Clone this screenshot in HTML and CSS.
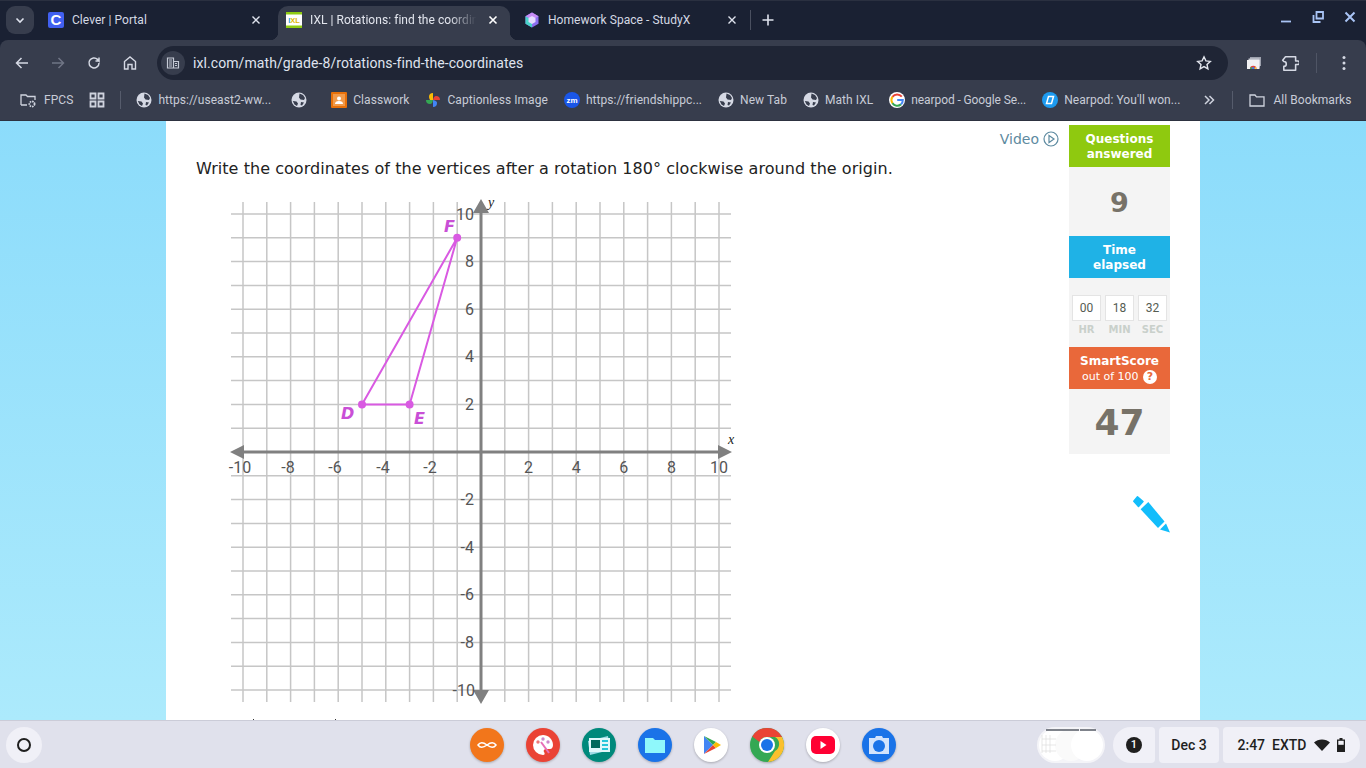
FILE: index.html
```html
<!DOCTYPE html>
<html lang="en">
<head>
<meta charset="utf-8">
<title>IXL | Rotations: find the coordinates</title>
<link rel="stylesheet" href="styles.css">
</head>
<body>
<header class="browser">
  <div class="tabstrip">
    <button class="tab-search"><svg width="12" height="12" viewBox="0 0 12 12"><path d="M2.500 4.500 6 8l3.500-3.500" fill="none" stroke="#dfe3ee" stroke-width="1.600"/></svg></button>
    <div class="tab">
      <svg class="fav" viewBox="0 0 16 16"><rect width="16" height="16" rx="2" fill="#4160f0"/><text x="8" y="13.300" text-anchor="middle" class="fav-c">C</text></svg>
      <span class="tab-title">Clever | Portal</span>
      <svg class="tab-x" viewBox="0 0 10 10"><path d="M1.500 1.500l7 7m0-7l-7 7" stroke="#dfe3ee" stroke-width="1.400"/></svg>
    </div>
    <div class="tab active">
      <svg class="fav" viewBox="0 0 16 16"><rect width="16" height="16" fill="#fff"/><rect width="16" height="2.500" fill="#8fcb12"/><rect y="13.500" width="16" height="2.500" fill="#8fcb12"/><text x="8" y="10.800" text-anchor="middle" class="fav-ixl"><tspan fill="#2f9fd8">I</tspan><tspan fill="#e0b400">X</tspan><tspan fill="#e0b400">L</tspan></text></svg>
      <span class="tab-title fade">IXL | Rotations: find the coordin</span>
      <svg class="tab-x" viewBox="0 0 10 10"><path d="M1.500 1.500l7 7m0-7l-7 7" stroke="#fff" stroke-width="1.600"/></svg>
    </div>
    <div class="tab third">
      <svg class="fav" viewBox="0 0 16 16"><path d="M8 .500l6.500 3.700v7.600L8 15.500l-6.500-3.700V4.200z" fill="#8c6ff0"/><path d="M8 .500l6.500 3.700L8 8 1.500 4.200z" fill="#c78cf5"/><path d="M1.500 4.200 8 8v7.500l-6.500-3.700z" fill="#49d3c8"/><path d="M8 4l3.500 2v4L8 12l-3.500-2V6z" fill="#e6dcff"/></svg>
      <span class="tab-title">Homework Space - StudyX</span>
      <svg class="tab-x" viewBox="0 0 10 10"><path d="M1.500 1.500l7 7m0-7l-7 7" stroke="#dfe3ee" stroke-width="1.400"/></svg>
    </div>
    <span class="tab-sep"></span>
    <svg class="new-tab" viewBox="0 0 12 12"><path d="M6 .500v11M.500 6h11" stroke="#dfe3ee" stroke-width="1.600"/></svg>
    <div class="win-controls">
      <svg class="win" viewBox="0 0 12 12"><path d="M1 10.500h10" stroke="#a9c4f5" stroke-width="1.800"/></svg>
      <svg class="win" viewBox="0 0 12 12"><path d="M4.500 1h6.500v6.500H4.500z" fill="none" stroke="#a9c4f5" stroke-width="1.800"/><path d="M1.500 4v7h7" fill="none" stroke="#a9c4f5" stroke-width="1.800"/></svg>
      <svg class="win" viewBox="0 0 12 12"><path d="M1.500 1.500l9 9m0-9l-9 9" stroke="#a9c4f5" stroke-width="2"/></svg>
    </div>
  </div>
  <div class="toolbar">
    <svg class="tool" viewBox="0 0 16 16"><path d="M14 8H3M7.500 3 2.500 8l5 5" fill="none" stroke="#d5d9e4" stroke-width="1.500"/></svg>
    <svg class="tool" viewBox="0 0 16 16"><path d="M2 8h11M8.500 3l5 5-5 5" fill="none" stroke="#6f7585" stroke-width="1.500"/></svg>
    <svg class="tool" viewBox="0 0 16 16"><path d="M13 8a5 5 0 1 1-1.500-3.600L13 6V2.500M13 6H9.500" fill="none" stroke="#d5d9e4" stroke-width="1.500"/></svg>
    <svg class="tool" viewBox="0 0 16 16"><path d="M2.500 14V6.500L8 2l5.500 4.500V14H10V9.500H6V14z" fill="none" stroke="#d5d9e4" stroke-width="1.400"/></svg>
    <div class="omnibox">
      <span class="site-chip"><svg viewBox="0 0 14 14" width="14" height="14"><path d="M1.500 2h6v10h-6z M7.500 5.500h5V12h-5z" fill="none" stroke="#c5cad6" stroke-width="1.200"/><path d="M3 4h3M3 6h3M3 8h3M3 10h3M9 7.500h2M9 9.500h2" stroke="#c5cad6"/></svg></span>
      <span class="url">ixl.com/math/grade-8/rotations-find-the-coordinates</span>
      <svg class="star" viewBox="0 0 16 16"><path d="M8 1.800l1.900 4.100 4.400.5-3.300 3 .9 4.400L8 11.600l-3.900 2.200.9-4.400-3.300-3 4.400-.5z" fill="none" stroke="#e3e6ee" stroke-width="1.400"/></svg>
    </div>
    <svg class="ext-chrome" viewBox="0 0 14 12"><rect x="3" y="0" width="11" height="9" fill="#9da1ad"/><rect x="1.500" y="1.500" width="11" height="9" fill="#c9ccd4"/><rect y="3" width="12.500" height="9" fill="#f1f1f3"/><path d="M3 12a3.250 3.250 0 0 1 6.500 0z" fill="#e0453a"/><path d="M3 12a3.250 3.250 0 0 1 1-2.300l1.500 2.300z" fill="#35a853"/><path d="M9.500 12a3.250 3.250 0 0 0-1-2.300L7 12z" fill="#f9c536"/><circle cx="6.250" cy="11.200" r="1.200" fill="#3b78e7"/></svg>
    <svg class="ext-puzzle" viewBox="0 0 16 16"><path d="M1.500 5.500 4 2.500h9v3.700h1.800a1.600 1.600 0 0 1 0 3.200H13v5H2.500V11a2.200 2.200 0 0 0 0-4.400z" fill="none" stroke="#d5d9e4" stroke-width="1.400" stroke-linejoin="round"/></svg>
    <span class="tool-sep"></span>
    <svg class="kebab" viewBox="0 0 4 16"><circle cx="2" cy="2.500" r="1.500" fill="#d5d9e4"/><circle cx="2" cy="8" r="1.500" fill="#d5d9e4"/><circle cx="2" cy="13.500" r="1.500" fill="#d5d9e4"/></svg>
  </div>
  <nav class="bookmarks">
    <div class="bm wide"><svg class="ico" viewBox="0 0 16 16"><path d="M1 13V3h5l1.500 1.500H15V8M1 13h6" fill="none" stroke="#cfd3de" stroke-width="1.300"/><circle cx="12" cy="12" r="2.600" fill="none" stroke="#cfd3de" stroke-width="1.800" stroke-dasharray="1.600 .8"/></svg><span>FPCS</span></div>
    <svg class="apps" viewBox="0 0 16 16"><path d="M1.500 1.500h5v5h-5zM9.500 1.500h5v5h-5zM1.500 9.500h5v5h-5zM9.500 9.500h5v5h-5z" fill="none" stroke="#cfd3de" stroke-width="1.800"/></svg>
    <span class="bm-sep"></span>
    <div class="bm"><svg class="ico"><use href="#globe"/></svg><span>https://useast2-ww...</span></div>
    <div class="bm bm-icononly"><svg class="ico"><use href="#globe"/></svg></div>
    <div class="bm"><svg class="ico" viewBox="0 0 16 16"><rect width="16" height="16" rx="1" fill="#e8710a"/><rect x="2" y="2" width="12" height="12" fill="#f29a49"/><circle cx="8" cy="6.500" r="2" fill="#fff"/><path d="M4 12a4 3 0 0 1 8 0z" fill="#fff"/></svg><span>Classwork</span></div>
    <div class="bm"><svg class="ico" viewBox="0 0 16 16"><path d="M8 8V1a4 4 0 0 0-4 4c0 1 .5 2 1 3z" fill="#f9bb05"/><path d="M8 8h7a4 4 0 0 0-4-4c-1.500 0-2.500 1-3 4z" fill="#ea4335"/><path d="M8 8v7a4 4 0 0 0 4-4c0-1.500-1-2.500-4-3z" fill="#4285f4"/><path d="M8 8H1a4 4 0 0 0 4 4c1.500 0 2.500-1 3-4z" fill="#34a853"/></svg><span>Captionless Image</span></div>
    <div class="bm"><svg class="ico" viewBox="0 0 16 16"><circle cx="8" cy="8" r="8" fill="#1a56e8"/><text x="8" y="10.500" text-anchor="middle" class="fav-zm">zm</text></svg><span>https://friendshippc...</span></div>
    <div class="bm"><svg class="ico"><use href="#globe"/></svg><span>New Tab</span></div>
    <div class="bm"><svg class="ico"><use href="#globe"/></svg><span>Math IXL</span></div>
    <div class="bm"><svg class="ico" viewBox="0 0 16 16"><circle cx="8" cy="8" r="8" fill="#fff"/><path d="M12.800 4.700A6 6 0 0 0 3.400 4.800" fill="none" stroke="#ea4335" stroke-width="2"/><path d="M3.400 4.800a6 6 0 0 0 0 6.400" fill="none" stroke="#fbbc05" stroke-width="2"/><path d="M3.400 11.200A6 6 0 0 0 12 12.400" fill="none" stroke="#34a853" stroke-width="2"/><path d="M12 12.400A6 6 0 0 0 13.800 8H8.200" fill="none" stroke="#4285f4" stroke-width="2"/></svg><span class="tight">nearpod - Google Se...</span></div>
    <div class="bm"><svg class="ico" viewBox="0 0 16 16"><circle cx="8" cy="8" r="8" fill="#1d9bf0"/><path d="M6.500 4.500h5l-2 7h-5z" fill="none" stroke="#fff" stroke-width="1.500"/></svg><span>Nearpod: You'll won...</span></div>
    <svg class="chev" viewBox="0 0 12 12"><path d="M2 2l4 4-4 4M6.500 2l4 4-4 4" fill="none" stroke="#cfd3de" stroke-width="1.500"/></svg>
    <span class="bm-sep last"></span>
    <div class="bm wide"><svg class="ico" viewBox="0 0 16 16"><path d="M1 3h5l1.500 1.800H15V14H1z" fill="none" stroke="#cfd3de" stroke-width="1.300"/></svg><span>All Bookmarks</span></div>
    <svg class="defs" width="0" height="0"><defs><symbol id="globe" viewBox="0 0 16 16"><circle cx="8" cy="8" r="7.500" fill="#d5d9e4"/><path d="M8.500 1.500 12 3l2 3-1 2-3.500-.5L8 5.500zM1.800 9l3.700.5 1.500 2-1 2.500-2.500-1.500zM10 10l3 .5-2 3-1.500-.5z" fill="#373d4d"/></symbol></defs></svg>
  </nav>
</header>

<main class="page">
  <section class="sheet">
    <div class="work">
      <a class="video">Video <svg viewBox="0 0 16 16" width="16" height="16"><circle cx="8" cy="8" r="7" fill="none" stroke="#5d8aa0" stroke-width="1.200"/><path d="M6 4.500 11 8l-5 3.500z" fill="none" stroke="#5d8aa0" stroke-width="1.200"/></svg></a>
      <p class="question">Write the coordinates of the vertices after a rotation 180° clockwise around the origin.</p>
      <svg class="graph" viewBox="221 195 520 520" width="520" height="520">
        <path class="grid" d="M243 202V702M266.800 202V702M290.600 202V702M314.400 202V702M338.200 202V702M362 202V702M385.800 202V702M409.600 202V702M433.400 202V702M457.200 202V702M504.800 202V702M528.600 202V702M552.400 202V702M576.200 202V702M600 202V702M623.800 202V702M647.600 202V702M671.400 202V702M695.200 202V702M719 202V702"/>
        <path class="grid" d="M231 214H731M231 237.800H731M231 261.600H731M231 285.400H731M231 309.200H731M231 333H731M231 356.800H731M231 380.600H731M231 404.400H731M231 428.200H731M231 475.800H731M231 499.600H731M231 523.400H731M231 547.200H731M231 571H731M231 594.800H731M231 618.600H731M231 642.400H731M231 666.200H731M231 690H731"/>
        <path class="axis" d="M240 452H722M481 210V694"/>
        <path class="arrow" d="M230 452l14-7v14zM732 452l-14-7v14zM481 199l-8 14h16zM481 704l-8-14h16z"/>
        <g class="tick">
          <text x="240" y="473" text-anchor="middle">-10</text><text x="288" y="473" text-anchor="middle">-8</text><text x="335" y="473" text-anchor="middle">-6</text><text x="383" y="473" text-anchor="middle">-4</text><text x="430" y="473" text-anchor="middle">-2</text>
          <text x="528.600" y="473" text-anchor="middle">2</text><text x="576.200" y="473" text-anchor="middle">4</text><text x="623.800" y="473" text-anchor="middle">6</text><text x="671.400" y="473" text-anchor="middle">8</text><text x="719" y="473" text-anchor="middle">10</text>
          <g text-anchor="end">
            <text x="474" y="220">10</text><text x="474" y="267">8</text><text x="474" y="315">6</text><text x="474" y="362">4</text><text x="474" y="410">2</text>
            <text x="474" y="505">-2</text><text x="474" y="553">-4</text><text x="474" y="600">-6</text><text x="474" y="648">-8</text><text x="475" y="696">-10</text>
          </g>
        </g>
        <text class="axis-name" x="728" y="444">x</text>
        <text class="axis-name" x="488" y="207">y</text>
        <path class="shape" d="M362 404.400H409.600L457.200 237.800Z"/>
        <circle class="pt" cx="362" cy="404.400" r="4"/><circle class="pt" cx="409.600" cy="404.400" r="4"/><circle class="pt" cx="457.200" cy="237.800" r="4"/>
        <text class="pt-name" x="341" y="419">D</text><text class="pt-name" x="414" y="424">E</text><text class="pt-name" x="444" y="232">F</text>
      </svg>
      <div class="clipped-line"><i></i><i></i></div>
    </div>
    <aside class="stats">
      <div class="stat-head green">Questions<br>answered</div>
      <div class="stat-value count">9</div>
      <div class="stat-head blue">Time<br>elapsed</div>
      <div class="timer">
        <div class="timer-cell"><b>00</b><span>HR</span></div>
        <div class="timer-cell"><b>18</b><span>MIN</span></div>
        <div class="timer-cell"><b>32</b><span>SEC</span></div>
      </div>
      <div class="stat-head orange">SmartScore<br><small>out of 100 <em>?</em></small></div>
      <div class="stat-value score">47</div>
      <svg class="pencil" viewBox="0 0 37 37" width="37" height="37"><path d="M4.500.8 10 5.500 5.500 10.500.8 5.300z" fill="#12bdfb" stroke="#12bdfb" stroke-width="1.500" stroke-linejoin="round"/><path d="M15.300 6 31.500 25.500 25 32 7.600 13.300z" fill="#12bdfb"/><path d="M33 27.500 27 33.500 37 36.500z" fill="#12bdfb"/></svg>
    </aside>
  </section>
</main>

<footer class="shelf">
  <span class="launcher"><i></i></span>
  <div class="apps-row">
    <svg class="app" viewBox="0 0 34 34"><circle cx="17" cy="17" r="17" fill="#f2761b"/><path d="M8 17c2-3 5-3 9 0s7 3 9 0c-2-3-5-3-9 0s-7 3-9 0z" fill="none" stroke="#fff" stroke-width="1.500"/></svg>
    <svg class="app" viewBox="0 0 34 34"><circle cx="17" cy="17" r="17" fill="#ea4335"/><path d="M17 7a10 10 0 1 0 0 20c2 0 2-2 1-3s0-3 2-3h4c2 0 3-2 3-4 0-6-5-10-10-10z" fill="#fff"/><circle cx="12" cy="14" r="1.700" fill="#e77"/><circle cx="17" cy="11" r="1.700" fill="#c8c"/><circle cx="22" cy="14" r="1.700" fill="#c8c"/><path d="M15 14l8 11" stroke="#e76fb8" stroke-width="2"/></svg>
    <svg class="app" viewBox="0 0 34 34"><circle cx="17" cy="17" r="17" fill="#00897b"/><path d="M6 13l20-5 2 14-20 5z" fill="#9fdbe6"/><rect x="7" y="10" width="21" height="14" fill="#e0f7fa"/><rect x="9" y="12" width="9" height="8" fill="#00695c"/><path d="M20 13h6M20 17h6M20 21h6" stroke="#26c6da" stroke-width="2"/></svg>
    <svg class="app" viewBox="0 0 34 34"><circle cx="17" cy="17" r="17" fill="#1a73e8"/><path d="M7 10h8l2 2h10v13H7z" fill="#8ff8fb"/></svg>
    <svg class="app" viewBox="0 0 34 34"><circle cx="17" cy="17" r="17" fill="#fff"/><path d="M10 8l9 9-9 9z" fill="#4285f4"/><path d="M10 8l12 6-3 3z" fill="#34a853"/><path d="M10 26l12-6-3-3z" fill="#ea4335"/><path d="M22 14l5 3-5 3-3-3z" fill="#fbbc05"/></svg>
    <svg class="app" viewBox="0 0 34 34"><circle cx="17" cy="17" r="17" fill="#34a853"/><path d="M2.300 8.500A17 17 0 0 1 32 9H17a8 8 0 0 0-7.500 5z" fill="#ea4335"/><path d="M32 9a17 17 0 0 1-14 25l7-11a8 8 0 0 0 0-14z" fill="#fbc02d"/><circle cx="17" cy="17" r="8" fill="#fff"/><circle cx="17" cy="17" r="6" fill="#1a73e8"/></svg>
    <svg class="app" viewBox="0 0 34 34"><circle cx="17" cy="17" r="17" fill="#fff"/><rect x="5" y="8" width="24" height="18" rx="5" fill="#ff0033"/><path d="M14.500 13l6 4-6 4z" fill="#fff"/></svg>
    <svg class="app" viewBox="0 0 34 34"><circle cx="17" cy="17" r="17" fill="#1a73e8"/><path d="M7 10h6l1-2h6l1 2h6v16H7z" fill="#d2e3fc"/><circle cx="17" cy="18" r="6" fill="#1a73e8"/></svg>
    <span class="active-dot"></span>
  </div>
  <div class="tray">
    <svg class="holding" viewBox="0 0 68 36" width="68" height="36"><rect width="68" height="36" rx="18" fill="#f4f4f8"/><circle cx="18" cy="18" r="16" fill="#fff"/><circle cx="34" cy="18" r="16" fill="#fafafa"/><circle cx="50" cy="18" r="16" fill="#fff"/><path d="M9 3h18M26 3h16M43 3h16" stroke="#555b66" stroke-width="1.400"/><path d="M5 8v18M9 8v18M13 8v18M5 12h14M5 18h14M5 24h14" stroke="#dcdcdc" stroke-width=".7"/></svg>
    <div class="pill notif"><span class="badge">1</span></div>
    <div class="pill date">Dec 3</div>
    <div class="pill time"><span>2:47</span><span>EXTD</span>
      <svg class="wifi" viewBox="0 0 16 12" width="16" height="12"><path d="M0 3.500C4 -.5 12 -.5 16 3.500L8 12z" fill="#1f1f1f"/></svg>
      <svg class="batt" viewBox="0 0 8 14" width="8" height="14"><path d="M2.500 0h3v1.500H8V14H0V1.500h2.500z" fill="#1f1f1f"/><rect x="1.300" y="2.800" width="5.400" height="4" fill="#f1f1f7"/></svg>
    </div>
  </div>
</footer>
</body>
</html>
```
FILE: styles.css
```css
* { box-sizing: border-box; }
html, body { margin: 0; height: 100%; }
body {
  width: 1366px;
  height: 768px;
  overflow: hidden;
  display: flex;
  flex-direction: column;
  font-family: Roboto, "Liberation Sans", sans-serif;
  background: #fff;
}
svg { display: block; flex: none; }

/* browser chrome */
.browser { flex: none; height: 121px; background: #1a2133; color: #dfe3ee; font-size: 12px; }
.tabstrip {
  height: 40px;
  display: flex;
  align-items: flex-end;
  border-top: 1px solid #2a3040;
  padding-left: 6px;
  position: relative;
}
.tab-search {
  width: 28px; height: 28px;
  align-self: flex-start;
  margin: 5px 4px 0 0;
  border: 0; border-radius: 9px;
  background: #373d4d;
  display: flex; align-items: center; justify-content: center;
  padding: 0;
}
.tab {
  width: 240px; height: 34px;
  display: flex; align-items: center;
  padding: 0 17px 6px 10px;
  gap: 8px;
  color: #d5d9e4;
}
.tab.active {
  width: 232px;
  background: #373d4d;
  border-radius: 10px 10px 0 0;
  color: #e3e6ee;
  padding: 0 12px 6px 8px;
  position: relative;
}
.tab.active::before, .tab.active::after {
  content: "";
  position: absolute;
  bottom: 0;
  width: 8px; height: 8px;
}
.tab.active::before { left: -8px; background: radial-gradient(circle at 0 0, transparent 8px, #373d4d 8.5px); }
.tab.active::after { right: -8px; background: radial-gradient(circle at 100% 0, transparent 8px, #373d4d 8.5px); }
.tab.third { width: 235px; padding: 0 8px 6px 14px; }
.fav { width: 16px; height: 16px; }
.fav-c { font: 700 15px "Liberation Sans", sans-serif; fill: #fff; }
.fav-ixl { font: 700 7.5px "Liberation Sans", sans-serif; }
.fav-zm { font: 700 8px "Liberation Sans", sans-serif; fill: #fff; }
.tab-title { flex: 1; min-width: 0; white-space: nowrap; letter-spacing: .05px; }
.fade { -webkit-mask-image: linear-gradient(to right, #000 82%, transparent 98%); mask-image: linear-gradient(to right, #000 82%, transparent 98%); }
.tab-x { width: 10px; height: 10px; }
.tab-sep { width: 1px; height: 20px; background: #4a5060; align-self: flex-start; margin: 9px 0 0 5px; }
.new-tab { width: 12px; height: 12px; align-self: flex-start; margin: 13px 0 0 11px; }
.win-controls { margin-left: auto; align-self: flex-start; display: flex; gap: 20px; padding-right: 10px; margin-top: 10px; }
.win { width: 12px; height: 12px; }

.toolbar {
  height: 41px;
  display: flex; align-items: center;
  padding: 5px 0 0 14px;
  background: #373d4d;
  border-radius: 8px 8px 0 0;
}
.tool { width: 16px; height: 16px; margin-right: 20px; }
.tool:nth-of-type(4) { margin-right: 19px; }
.omnibox {
  width: 1071px; height: 34px;
  background: #1f2535;
  border-radius: 17px;
  display: flex; align-items: center;
  padding: 0 16px 0 4px;
}
.site-chip {
  width: 24px; height: 24px; border-radius: 50%;
  background: #373d4d;
  display: flex; align-items: center; justify-content: center;
}
.url { margin-left: 8px; flex: 1; font-size: 14px; color: #dfe3ee; letter-spacing: .08px; }
.star { width: 16px; height: 16px; }
.ext-chrome { width: 14px; height: 12px; margin-left: 19px; }
.ext-puzzle { width: 18px; height: 18px; margin-left: 20px; }
.tool-sep { width: 1px; height: 20px; background: #4f5565; margin-left: 17px; }
.kebab { width: 4px; height: 16px; margin-left: 25px; }

.bookmarks {
  height: 40px;
  display: flex; align-items: center;
  padding: 0 0 2px 20px;
  gap: 16px;
  color: #c8ccd7;
  background: #373d4d;
  border-bottom: 1px solid #2d3240;
  letter-spacing: .06px;
}
.bm { display: flex; align-items: center; gap: 6px; white-space: nowrap; }
.bm.wide { gap: 8px; }
.bm-icononly { margin-left: 4px; margin-right: 8px; }
.tight { letter-spacing: -.1px; }
.ico { width: 16px; height: 16px; }
.apps { width: 16px; height: 16px; }
.bm-sep { width: 1px; height: 18px; background: #565c6c; margin: 0 -1px; }
.bm-sep.last { margin: 0 0 0 1px; }
.chev { width: 12px; height: 12px; margin-left: 7px; }
.defs { position: absolute; }

/* page */
.page {
  flex: 1;
  min-height: 0;
  overflow: hidden;
  background: linear-gradient(#8cdcfb, #aceafc);
  display: flex;
  justify-content: center;
}
.sheet {
  width: 1034px;
  background: #fff;
  display: flex;
  padding: 4px 30px 0 30px;
  font-family: "DejaVu Sans", Verdana, sans-serif;
}
.work { flex: 1; min-width: 0; display: flex; flex-direction: column; }
.video {
  align-self: flex-end;
  display: flex; align-items: center; gap: 4px;
  margin: 0 10px 0 0;
  height: 28px;
  font-size: 14px;
  color: #5d8aa0;
}
.question { margin: 5px 0 0; font-size: 16px; line-height: 22px; color: #222; letter-spacing: .05px; white-space: nowrap; }
.graph { margin: 15px 0 0 25px; }
.grid { fill: none; stroke: #c6c6c6; stroke-width: 1.500; }
.axis { fill: none; stroke: #808080; stroke-width: 3; }
.arrow { fill: #808080; }
.tick text { font: 16px Roboto, sans-serif; fill: #555; }
.axis-name { font: italic 14px "Liberation Serif", serif; fill: #222; }
.shape { fill: none; stroke: #d95ae2; stroke-width: 2; stroke-linejoin: round; }
.pt { fill: #d95ae2; }
.pt-name { font: italic 700 16px "DejaVu Sans", sans-serif; fill: #c94fd6; }
.clipped-line { display: flex; gap: 81px; padding-left: 57px; margin-top: 4px; }
.clipped-line i { width: 1px; height: 1px; background: #333; }

/* stats */
.stats { width: 101px; flex: none; display: flex; flex-direction: column; }
.stat-head {
  height: 42px;
  display: block;
  padding-top: 7px;
  text-align: center;
  color: #fff;
  font-size: 12px; font-weight: 700; line-height: 15px;
}
.stat-head small { font-size: 11px; font-weight: 400; }
.stat-head em {
  display: inline-block;
  width: 14px; height: 14px;
  border-radius: 50%;
  background: #fff;
  color: #e9683a;
  font: 700 11px/14px "DejaVu Sans", sans-serif;
  margin-left: 1px;
}
.green { background: #8fc90f; }
.blue { background: #1fb2e6; }
.orange { background: #e9683a; }
.stat-value { background: #f4f4f4; color: #777268; font-weight: 700; text-align: center; }
.count { height: 69px; font-size: 27px; line-height: 71px; }
.score { height: 65px; font-size: 36px; line-height: 68px; }
.timer {
  height: 69px;
  background: #f4f4f4;
  display: flex;
  gap: 4px;
  padding: 17px 3px 0;
}
.timer-cell { flex: 1; display: flex; flex-direction: column; align-items: center; }
.timer-cell b {
  width: 100%; height: 26px;
  border: 1px solid #e4e4e4;
  background: #fff;
  font: 400 12px/24px Roboto, sans-serif;
  color: #555c52;
  text-align: center;
}
.timer-cell span { margin-top: 3px; font-size: 10px; font-weight: 700; color: #c9d0cb; line-height: 12px; }
.pencil { margin: 42px 0 0 64px; }

/* shelf */
.shelf {
  flex: none;
  height: 48px;
  background: #e0e1ec;
  border-top: 1px solid #cbccd8;
  display: flex;
  align-items: center;
  padding: 0 6px;
  color: #1f1f1f;
}
.launcher {
  width: 36px; height: 36px;
  border-radius: 50%;
  background: #f0f0f7;
  display: flex; align-items: center; justify-content: center;
}
.launcher i { width: 14px; height: 14px; border: 2px solid #1f1f1f; border-radius: 50%; }
.apps-row { display: flex; gap: 22px; margin-left: 428px; position: relative; }
.app { width: 34px; height: 34px; filter: drop-shadow(0 1px 1px rgba(0,0,0,.25)); }
.active-dot { position: absolute; left: 290px; top: 40px; width: 14px; height: 2px; background: #1f1f1f; }
.tray { margin-left: auto; display: flex; align-items: center; gap: 4px; }
.holding { margin-right: 4px; }
.pill {
  height: 36px;
  background: #f0f0f7;
  border-radius: 4px;
  display: flex; align-items: center; justify-content: center;
  font-size: 14px;
  font-weight: 500;
  color: #1f1f1f;
}
.notif { width: 42px; border-radius: 18px 4px 4px 18px; }
.badge { width: 16px; height: 16px; border-radius: 50%; background: #1f1f1f; color: #fff; font-size: 11px; line-height: 16px; text-align: center; }
.date { width: 60px; }
.time { width: 137px; border-radius: 4px 18px 18px 4px; gap: 7px; }
.wifi { margin-left: 1px; }
```
